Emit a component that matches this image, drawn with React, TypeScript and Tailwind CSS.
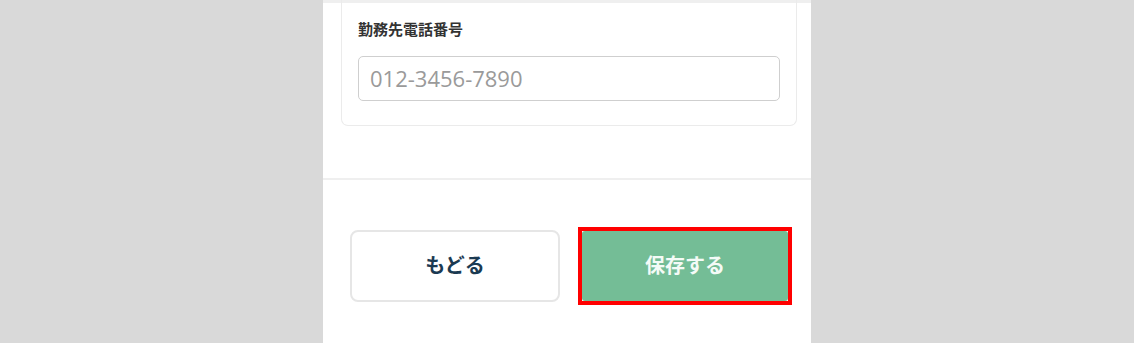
export default function App() {
  const jp = { fontFamily: '"Noto Sans", "Noto Sans CJK JP", sans-serif' };

  return (
    <div className="w-[1134px] h-[343px] bg-[#d9d9d9] flex justify-center overflow-hidden" style={jp}>
      <div className="w-[488px] h-full bg-white flex flex-col">
        <div className="h-[3px] bg-[#efefef]" />

        {/* Form card (top cut off) */}
        <div className="ml-[18px] w-[456px] h-[126px] -mt-[3px] border-x-[1.5px] border-b-[1.5px] border-[#ebebeb] rounded-b-[7px] px-[16px] pt-[19px]">
          <div className="text-[15px] font-bold leading-[20px] text-[#333]">勤務先電話番号</div>
          <div className="mt-[17px] h-[45px] border-[1.5px] border-[#cfcfcf] rounded-[5px] flex items-center px-[11px]">
            <input
              className="w-full outline-none bg-transparent text-[22px] text-[#333] placeholder:text-[#9a9a9a]"
              style={{ fontFamily: '"Open Sans", sans-serif' }}
              placeholder="012-3456-7890"
            />
          </div>
        </div>

        <div className="mt-[52px] h-[2px] bg-[#efefef]" />

        {/* Action buttons */}
        <div className="flex items-center pl-[27px] gap-[18px] mt-[47px]">
          <button className="w-[210px] h-[72px] border-2 border-[#e6e6e6] rounded-[8px] bg-white text-[20px] font-bold text-[#1b3a52]">
            もどる
          </button>
          <div className="w-[214px] h-[78px] border-4 border-[#ff0000] p-0">
            <button className="w-full h-full bg-[#74bd96] rounded-[3px] text-[20px] font-bold text-[#f4fbf7]">
              保存する
            </button>
          </div>
        </div>
      </div>
    </div>
  );
}
